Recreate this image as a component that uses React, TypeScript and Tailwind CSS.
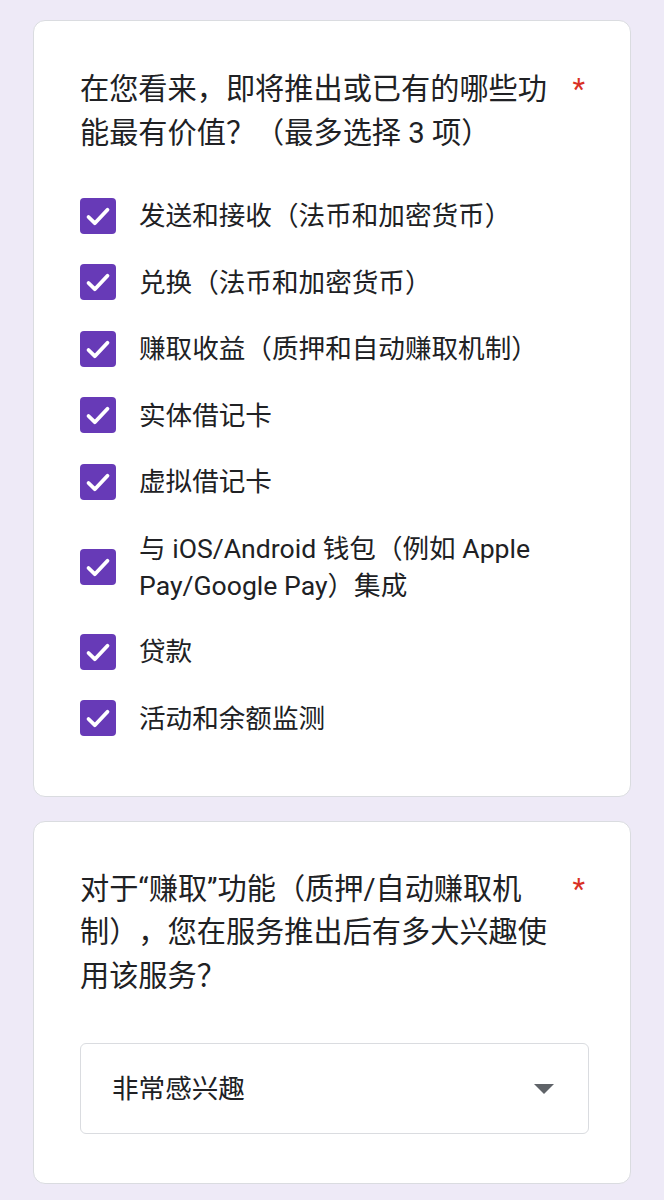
const options = [
  '发送和接收（法币和加密货币）',
  '兑换（法币和加密货币）',
  '赚取收益（质押和自动赚取机制）',
  '实体借记卡',
  '虚拟借记卡',
  '与 iOS/Android 钱包（例如 Apple Pay/Google Pay）集成',
  '贷款',
  '活动和余额监测',
];

function CheckedBox() {
  return (
    <svg width="36" height="36" viewBox="0 0 36 36" className="shrink-0">
      <rect x="0" y="0" width="36" height="36" rx="4" fill="#673ab7" />
      <path
        d="M8.5 19 L14.8 25.2 L27.5 11.8"
        fill="none"
        stroke="#ffffff"
        strokeWidth="3.8"
        strokeLinecap="round"
        strokeLinejoin="round"
      />
    </svg>
  );
}

function QuestionTitle({ children }: { children: React.ReactNode }) {
  return (
    <div className="flex items-start">
      <div className="w-[474px] text-[29.2px] leading-[43.5px] text-[#202124]">{children}</div>
      <span className="ml-auto pr-[4px] text-[29px] leading-[43px] text-[#d93025]">*</span>
    </div>
  );
}

export default function App() {
  return (
    <div className="min-h-screen bg-[#eeeaf7] px-[33px] pt-[20px] pb-[20px] [font-family:Roboto,'Noto_Sans_CJK_SC',sans-serif] [text-spacing-trim:space-all]">
      <div className="flex flex-col gap-[24px]">
        <div className="rounded-[12px] border border-[#dadce0] bg-white pl-[46px] pr-[41px] pt-[47px] pb-[59px]">
          <QuestionTitle>在您看来，即将推出或已有的哪些功能最有价值？（最多选择 3 项）</QuestionTitle>
          <div className="mt-[42px] flex flex-col gap-[29.5px]">
            {options.map((o) => (
              <div key={o} className="flex items-center gap-[23px]">
                <CheckedBox />
                <span className="text-[26.6px] leading-[37px] text-[#202124]">{o}</span>
              </div>
            ))}
          </div>
        </div>

        <div className="rounded-[12px] border border-[#dadce0] bg-white pl-[46px] pr-[41px] pt-[46px] pb-[49px]">
          <QuestionTitle>对于“赚取”功能（质押/自动赚取机制），您在服务推出后有多大兴趣使用该服务？</QuestionTitle>
          <div className="mt-[45px] flex h-[91px] items-center rounded-[6px] border border-[#dadce0] pl-[31px] pr-[34px]">
            <span className="text-[26.6px] leading-[37px] text-[#202124]">非常感兴趣</span>
            <svg width="20" height="10" viewBox="0 0 20 10" className="ml-auto">
              <path d="M0 0 L20 0 L10 10 Z" fill="#5f6368" />
            </svg>
          </div>
        </div>
      </div>
    </div>
  );
}
